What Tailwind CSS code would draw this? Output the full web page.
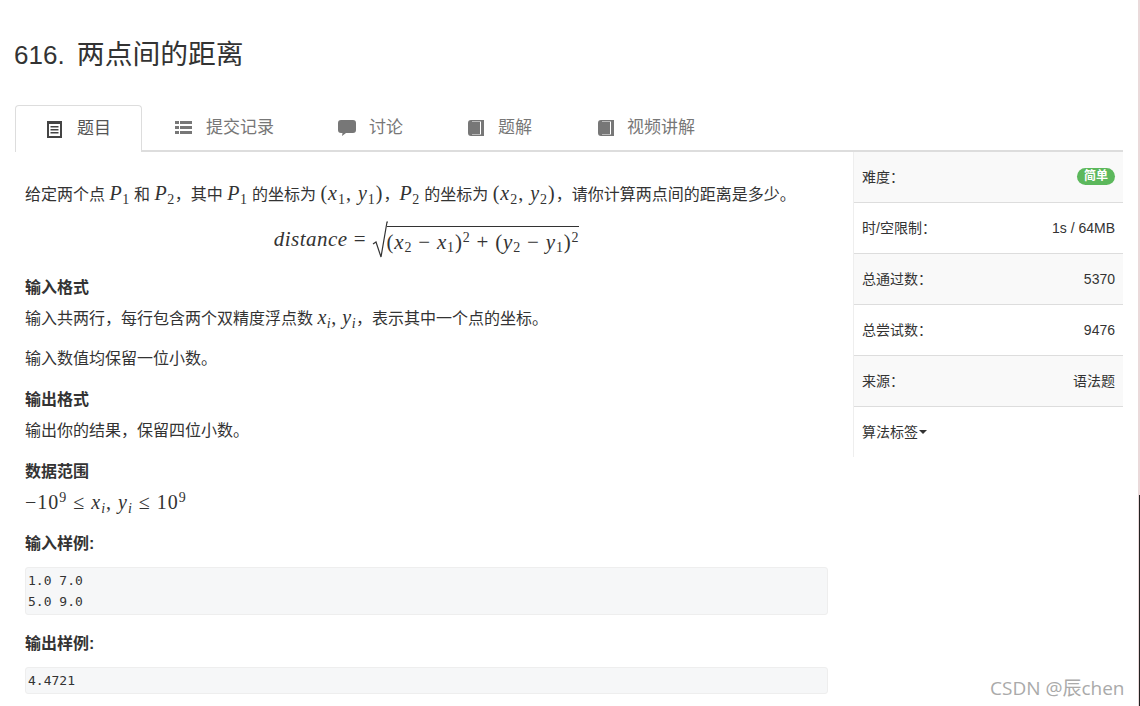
<!DOCTYPE html>
<html lang="zh-CN">
<head>
  <meta charset="UTF-8" />
  <title>616. 两点间的距离</title>
  <script src="https://cdn.jsdelivr.net/npm/@tailwindcss/browser@4"></script>
</head>
<body class="bg-white text-[#333] font-['Liberation_Sans','Noto_Sans_CJK_SC',sans-serif] text-[16px] overflow-hidden">
  <div class="relative w-[1140px] h-[706px] overflow-hidden">
    <!-- Title -->
    <h1 class="pt-[39px] pl-[14px] h-[105px] text-[26px] leading-[32px] font-normal">616. <span class="ml-[5px] text-[27.8px]">两点间的距离</span></h1>

    <!-- Tabs -->
    <nav class="ml-[15px] w-[1108px] h-[47px] flex border-b-2 border-[#ddd] text-[17px] text-[#777]">
      <a class="w-[127px] h-[47px] pl-[30px] flex items-center gap-[14px] bg-white border border-b-0 border-[#ddd] rounded-t text-[#555]">
        <svg class="w-[17px] h-[17px]" viewBox="0 0 17 17"><path fill="#444" fill-rule="evenodd" d="M1 0h15v17H1zM3 3v12h11V3zM4.500 5h8v1.500h-8zM4.500 8h8v1.500h-8zM4.500 11h8v1.500h-8z"/></svg>
        <span>题目</span>
      </a>
      <a class="ml-[1px] w-[163px] pl-[32px] flex items-center gap-[14px]">
        <svg class="w-[17px] h-[17px]" viewBox="0 0 17 17"><path fill="#777" d="M0 2h4v3H0zM5 2h12v3H5zM0 7h4v3H0zM5 7h12v3H5zM0 12h4v3H0zM5 12h12v3H5z"/></svg>
        <span>提交记录</span>
      </a>
      <a class="w-[130px] pl-[32px] flex items-center gap-[13px]">
        <svg class="w-[18px] h-[17px]" viewBox="0 0 18 17"><path fill="#777" d="M3 1h12q3 0 3 3v7q0 3-3 3H8l-4 3 .500-3H3q-3 0-3-3V4q0-3 3-3z"/></svg>
        <span>讨论</span>
      </a>
      <a class="w-[130px] pl-[32px] flex items-center gap-[13px]">
        <svg class="w-[17px] h-[17px]" viewBox="0 0 17 17"><path fill="#777" fill-rule="evenodd" d="M3 1h13v16H3q-3 0-3-3V4q0-3 3-3zM13 2.500H4v13h9z"/><path fill="#777" d="M4 3h8v12H4z"/></svg>
        <span>题解</span>
      </a>
      <a class="pl-[32px] flex items-center gap-[12px]">
        <svg class="w-[17px] h-[17px]" viewBox="0 0 17 17"><path fill="#777" fill-rule="evenodd" d="M3 1h13v16H3q-3 0-3-3V4q0-3 3-3zM13 2.500H4v13h9z"/><path fill="#777" d="M4 3h8v12H4z"/></svg>
        <span>视频讲解</span>
      </a>
    </nav>

    <div class="flex">
      <!-- Problem body -->
      <main class="pl-[25px] w-[828px] shrink-0">
        <p class="mt-[26px] h-[30px] leading-[30px] whitespace-nowrap">给定两个点 <i class="text-[20px] tracking-[0.5px] font-['Liberation_Serif',serif]">P<sub class="not-italic text-[14px]">1</sub></i> 和 <i class="text-[20px] tracking-[0.5px] font-['Liberation_Serif',serif]">P<sub class="not-italic text-[14px]">2</sub></i>，其中 <i class="text-[20px] tracking-[0.5px] font-['Liberation_Serif',serif]">P<sub class="not-italic text-[14px]">1</sub></i> 的坐标为 <span class="text-[20px] tracking-[1px] font-['Liberation_Serif',serif]">(<i>x</i><sub class="text-[14px]">1</sub>, <i>y</i><sub class="text-[14px]">1</sub>)</span>，<i class="text-[20px] tracking-[0.5px] font-['Liberation_Serif',serif]">P<sub class="not-italic text-[14px]">2</sub></i> 的坐标为 <span class="text-[20px] tracking-[1px] font-['Liberation_Serif',serif]">(<i>x</i><sub class="text-[14px]">2</sub>, <i>y</i><sub class="text-[14px]">2</sub>)</span>，请你计算两点间的距离是多少。</p>

        <div class="mt-[12px] h-[40px] flex justify-center items-center text-[21px] font-['Liberation_Serif',serif] whitespace-nowrap">
          <i class="tracking-[0.5px]">distance</i><span class="mx-[6px]">=</span>
          <svg class="w-[16px] h-[38px] -mr-[1px]" viewBox="0 0 16 38"><path fill="none" stroke="#333" stroke-width="1.200" d="M1 23l3-2 5 15L15 1h1"/></svg>
          <span class="border-t border-[#333] pt-[2px] leading-[26px] tracking-[0.8px]">(<i>x</i><sub class="text-[14px]">2</sub> − <i>x</i><sub class="text-[14px]">1</sub>)<sup class="text-[14px]">2</sup> + (<i>y</i><sub class="text-[14px]">2</sub> − <i>y</i><sub class="text-[14px]">1</sub>)<sup class="text-[14px]">2</sup></span>
        </div>

        <h4 class="mt-[16px] text-[16px] leading-[24px] font-bold">输入格式</h4>
        <p class="mt-[2px] h-[30px] leading-[30px]">输入共两行，每行包含两个双精度浮点数 <span class="text-[20px] tracking-[0.5px] font-['Liberation_Serif',serif]"><i>x<sub class="text-[14px]">i</sub></i>, <i>y<sub class="text-[14px]">i</sub></i></span>，表示其中一个点的坐标。</p>
        <p class="mt-[12px] h-[30px] leading-[30px]">输入数值均保留一位小数。</p>

        <h4 class="mt-[14px] text-[16px] leading-[24px] font-bold">输出格式</h4>
        <p class="mt-[4px] h-[30px] leading-[30px]">输出你的结果，保留四位小数。</p>

        <h4 class="mt-[14px] text-[16px] leading-[24px] font-bold">数据范围</h4>
        <p class="mt-[3px] h-[30px] leading-[30px] text-[20px] tracking-[1px] font-['Liberation_Serif',serif]">−10<sup class="text-[14px]">9</sup> ≤ <i>x<sub class="text-[14px]">i</sub></i>, <i>y<sub class="text-[14px]">i</sub></i> ≤ 10<sup class="text-[14px]">9</sup></p>

        <h4 class="mt-[15px] text-[16px] leading-[24px] font-bold">输入样例:</h4>
        <pre class="mt-[11px] h-[48px] px-[2px] pt-[2px] bg-[#f6f7f8] border border-[#eee] rounded-[3px] font-['DejaVu_Sans_Mono',monospace] text-[13px] leading-[21px]">1.0 7.0
5.0 9.0</pre>

        <h4 class="mt-[17px] text-[16px] leading-[24px] font-bold">输出样例:</h4>
        <pre class="mt-[11px] h-[27px] px-[2px] pt-[2px] bg-[#f6f7f8] border border-[#eee] rounded-[3px] font-['DejaVu_Sans_Mono',monospace] text-[13px] leading-[21px]">4.4721</pre>
      </main>

      <!-- Sidebar -->
      <aside class="ml-[25px] w-[270px] h-[305px] border-l border-[#eee] text-[14px] text-[#333]">
        <div class="h-[51px] px-[8px] flex items-center justify-between bg-[#f9f9f9] border-b border-[#ddd]">
          <span>难度：</span>
          <span class="-translate-y-[1px] h-[17px] px-[7px] rounded-full bg-[#5cb85c] text-white text-[12px] leading-[17px] font-bold">简单</span>
        </div>
        <div class="h-[51px] px-[8px] flex items-center justify-between border-b border-[#ddd]"><span>时/空限制：</span><span>1s / 64MB</span></div>
        <div class="h-[51px] px-[8px] flex items-center justify-between bg-[#f9f9f9] border-b border-[#ddd]"><span>总通过数：</span><span>5370</span></div>
        <div class="h-[51px] px-[8px] flex items-center justify-between border-b border-[#ddd]"><span>总尝试数：</span><span>9476</span></div>
        <div class="h-[51px] px-[8px] flex items-center justify-between bg-[#f9f9f9] border-b border-[#ddd]"><span>来源：</span><span>语法题</span></div>
        <div class="h-[50px] px-[8px] flex items-center">算法标签<span class="ml-[1px] w-0 h-0 border-x-[4.5px] border-x-transparent border-t-[4.5px] border-t-[#333]"></span></div>
      </aside>
    </div>

    <!-- Watermark -->
    <span class="absolute left-[990px] top-[676px] text-[19px] leading-[24px] text-[#aaa] font-['Open_Sans','Noto_Sans_CJK_SC',sans-serif]">CSDN @辰chen</span>

    <!-- Window edge -->
    <div class="absolute right-0 top-0 w-[2px] h-[706px] bg-[#ead9da]"></div>
    <div class="absolute right-0 top-[495px] w-[1px] h-[211px] bg-[#222]"></div>
  </div>
</body>
</html>
